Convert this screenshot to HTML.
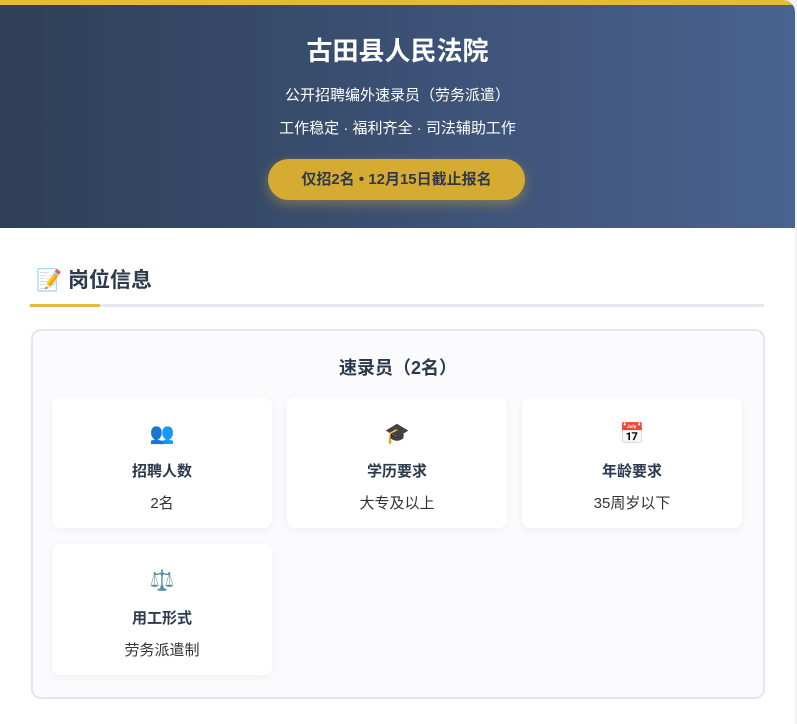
<!DOCTYPE html><html><head><meta charset="utf-8"><style>
body{margin:0;background:#f3f4f7;font-family:"Liberation Sans","Noto Sans CJK SC",sans-serif;width:797px;height:724px;overflow:hidden}
.wrap{position:absolute;left:0;top:0;width:795px;height:724px;background:#fff;border-radius:0 12px 0 0;overflow:hidden}
.hd{height:228px;background:linear-gradient(90deg,#2e3f56,#3b5073 50%,#4a6290);border-top:5px solid #e3bb35;box-sizing:border-box;text-align:center;color:#fff;position:relative}
.hd h1{margin:0;position:absolute;top:26px;width:100%;font-size:26px;font-weight:bold}
.l1{position:absolute;top:79px;width:100%;font-size:15px}
.l2{position:absolute;top:112px;width:100%;font-size:15px}
.btn{position:absolute;left:268px;top:154px;width:257px;height:41px;border-radius:21px;background:#d5ab32;color:#2e3a4c;font-weight:bold;font-size:15px;line-height:41px;box-shadow:0 4px 12px rgba(213,171,50,.45)}
.st{position:absolute;left:36px;top:264px;font-size:21px;font-weight:bold;color:#2c3a4d}
.ul{position:absolute;left:30px;top:304px;width:734px;height:3px;background:#e6e8ee}
.ul i{display:block;width:70px;height:3px;background:#e3bb35}
.box{position:absolute;left:31px;top:329px;width:730px;height:366px;border:2px solid #e3e6f1;border-radius:10px;background:#fbfbfd}
.bt{position:absolute;top:23px;width:100%;text-align:center;font-size:18px;font-weight:bold;color:#2c3a4d}
.it{position:absolute;width:220px;height:131px;background:#fff;border-radius:8px;box-shadow:0 2px 8px rgba(0,0,0,.05);text-align:center}
.ic{position:absolute;top:26px;width:100%;font-size:20px;line-height:22px}
.lb{position:absolute;top:63px;width:100%;font-size:15px;font-weight:bold;color:#2c3a4d}
.vl{position:absolute;top:95px;width:100%;font-size:15px;color:#333}
</style></head><body><div class="wrap">
<div class="hd"><h1>古田县人民法院</h1><div class="l1">公开招聘编外速录员（劳务派遣）</div><div class="l2">工作稳定 · 福利齐全 · 司法辅助工作</div><div class="btn">仅招2名 • 12月15日截止报名</div></div>
<div class="st">📝 岗位信息</div>
<div class="ul"><i></i></div>
<div class="box"><div class="bt">速录员（2名）</div>
<div class="it" style="left:19px;top:66px"><div class="ic">👥</div><div class="lb">招聘人数</div><div class="vl">2名</div></div>
<div class="it" style="left:254px;top:66px"><div class="ic">🎓</div><div class="lb">学历要求</div><div class="vl">大专及以上</div></div>
<div class="it" style="left:489px;top:66px"><div class="ic">📅</div><div class="lb">年龄要求</div><div class="vl">35周岁以下</div></div>
<div class="it" style="left:19px;top:213px"><div class="ic">⚖️</div><div class="lb">用工形式</div><div class="vl">劳务派遣制</div></div>
</div></div></body></html>
